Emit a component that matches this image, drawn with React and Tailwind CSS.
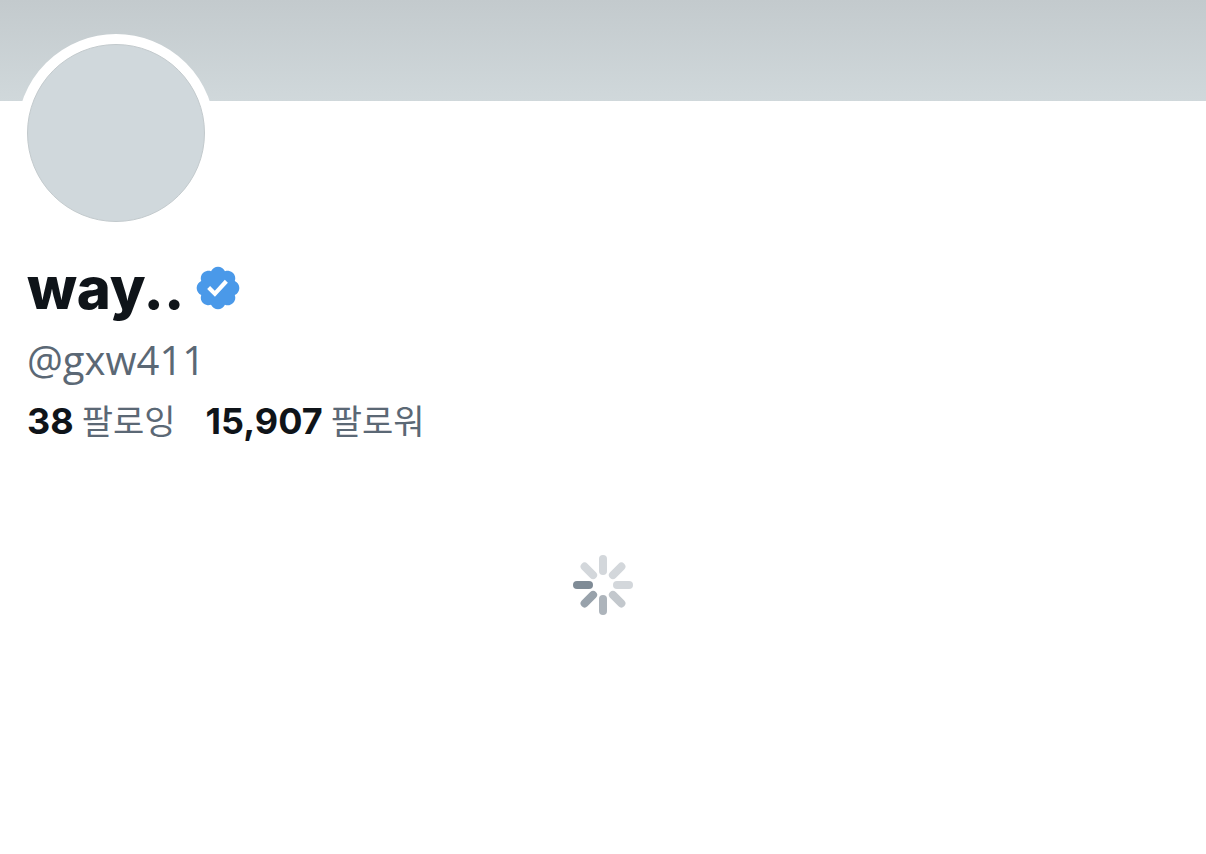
import React from 'react';

const stats = [
  { label: '팔로잉', value: '38', href: '#following' },
  { label: '팔로워', value: '15,907', href: '#followers' },
];

// Spokes go clockwise from 12 o'clock
const spokes = ['#d3d7db', '#d3d7db', '#d3d7db', '#c3c8cd', '#adb4bb', '#98a2ab', '#7f8b96', '#d3d7db'];

const VerifiedBadge = () => (
  <svg viewBox="0 0 22 22" className="w-[50px] h-[50px] shrink-0" role="img" aria-label="인증된 계정">
    <path
      fill="#4a99e9"
      d="M20.396 11c-.018-.646-.215-1.275-.57-1.816-.354-.54-.852-.972-1.438-1.246.223-.607.27-1.264.14-1.897-.131-.634-.437-1.218-.882-1.687-.47-.445-1.053-.75-1.687-.882-.633-.13-1.29-.083-1.897.14-.273-.587-.704-1.086-1.245-1.44S11.647 1.62 11 1.604c-.646.017-1.273.213-1.813.568s-.969.854-1.24 1.44c-.608-.223-1.267-.272-1.902-.14-.635.13-1.22.436-1.69.882-.445.47-.749 1.055-.878 1.688-.13.633-.08 1.29.144 1.896-.587.274-1.087.705-1.443 1.245-.356.54-.555 1.17-.574 1.817.02.647.218 1.276.574 1.817.356.54.856.972 1.443 1.245-.224.606-.274 1.263-.144 1.896.13.634.433 1.218.877 1.688.47.443 1.054.747 1.687.878.633.132 1.29.084 1.897-.136.274.586.705 1.084 1.246 1.439.54.354 1.17.551 1.816.569.647-.016 1.276-.213 1.817-.567s.972-.854 1.245-1.44c.604.239 1.266.296 1.903.164.636-.132 1.22-.447 1.68-.907.46-.46.776-1.044.908-1.681s.075-1.299-.165-1.903c.586-.274 1.084-.705 1.439-1.246.354-.54.551-1.17.569-1.816zM9.662 14.85l-3.429-3.428 1.293-1.302 2.072 2.072 4.4-4.794 1.347 1.246z"
    />
  </svg>
);

const Spinner = () => (
  <svg viewBox="0 0 60 60" className="w-[60px] h-[60px]" role="img" aria-label="로드 중">
    {spokes.map((color, i) => (
      <rect key={i} x="26" y="0" width="8" height="20" rx="4" fill={color} transform={`rotate(${i * 45} 30 30)`} />
    ))}
  </svg>
);

const App = () => {
  return (
    <main className="min-h-screen bg-white text-[#0f1419] font-['Inter','Noto_Sans_CJK_KR',sans-serif]">
      {/* Banner */}
      <div className="h-[101px] bg-gradient-to-b from-[#c3cacd] to-[#d0d8db]"></div>

      <section className="px-[27px]">
        {/* Avatar */}
        <div className="relative w-[198px] h-[198px] -mt-[67px] -ml-[10px] rounded-full border-10 border-white bg-white">
          <div className="w-full h-full rounded-full border border-[#c3cacd] bg-[#d0d8dc]"></div>
        </div>

        {/* Name */}
        <div className="mt-5 flex items-center gap-2">
          <h1 className="text-[58px] leading-[72px] font-extrabold">way..</h1>
          <VerifiedBadge />
        </div>
        <p className="mt-2 text-[40px] leading-[56px] text-[#5b6875] font-['Open_Sans',sans-serif]">@gxw411</p>

        {/* Counts */}
        <div className="mt-2 flex flex-wrap gap-x-[30px]">
          {stats.map((item) => (
            <a key={item.label} href={item.href} className="flex items-baseline gap-2 text-[36px] leading-[48px]">
              <span className="font-bold">{item.value}</span>
              <span className="text-[34px] text-[#5b6875] font-['Noto_Sans_CJK_KR',sans-serif]">{item.label}</span>
            </a>
          ))}
        </div>
      </section>

      <div className="mt-[110px] flex justify-center">
        <Spinner />
      </div>
    </main>
  );
};

export default App;
